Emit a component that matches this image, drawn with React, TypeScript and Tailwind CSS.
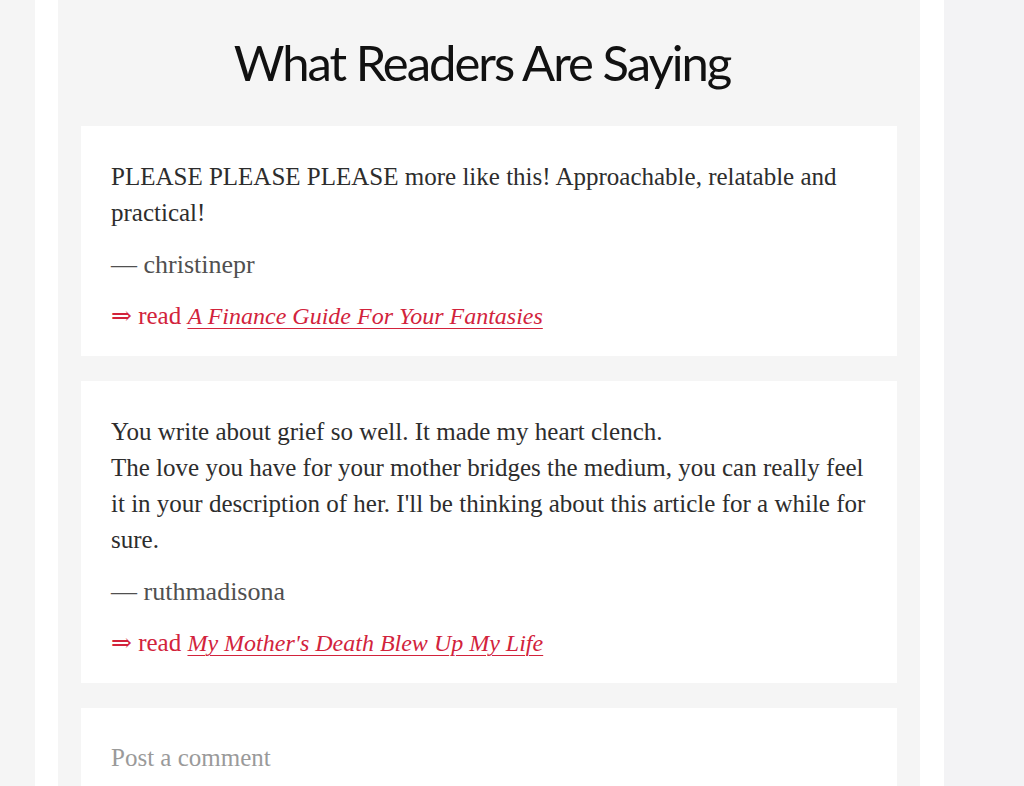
const serif = { fontFamily: '"Liberation Serif", "DejaVu Serif", serif' };

type Review = {
  body: string[];
  author: string;
  title: string;
};

const reviews: Review[] = [
  {
    body: ["PLEASE PLEASE PLEASE more like this! Approachable, relatable and practical!"],
    author: "christinepr",
    title: "A Finance Guide For Your Fantasies",
  },
  {
    body: [
      "You write about grief so well. It made my heart clench.",
      "The love you have for your mother bridges the medium, you can really feel it in your description of her. I'll be thinking about this article for a while for sure.",
    ],
    author: "ruthmadisona",
    title: "My Mother's Death Blew Up My Life",
  },
];

function ReviewCard({ review }: { review: Review }) {
  return (
    <div className="bg-white pl-[30px] pr-[24px] pt-[33px] pb-[22px]" style={serif}>
      <div className="text-[25px] leading-[36px] text-[#2d2d2d]">
        {review.body.map((line, i) => (
          <p key={i}>{line}</p>
        ))}
      </div>
      <p className="mt-[16px] text-[26px] leading-[36px] text-[#505050]">— {review.author}</p>
      <p className="mt-[15px] text-[25px] leading-[36px] text-[#d2233c]">
        ⇒ read{" "}
        <a href="#" className="text-[24px] italic underline decoration-1 underline-offset-4">
          {review.title}
        </a>
      </p>
    </div>
  );
}

export default function App() {
  return (
    <div className="flex h-[786px] w-[1024px] overflow-hidden bg-[#f4f4f5]">
      <div className="w-[35px] shrink-0 bg-[#f5f5f5]" />
      <div className="w-[23px] shrink-0 bg-white" />
      <div className="flex w-[862px] shrink-0 flex-col bg-[#f5f5f5] px-[23px]">
        <h2
          className="pt-[34px] pb-[36px] pr-[14px] text-center text-[49px] leading-[56px] tracking-[-2px] text-[#111]"
          style={{ fontFamily: 'Lato, "Open Sans", sans-serif' }}
        >
          What Readers Are Saying
        </h2>
        <div className="flex flex-col gap-[25px]">
          {reviews.map((r) => (
            <ReviewCard key={r.author} review={r} />
          ))}
          <div className="h-[100px] bg-white px-[30px] pt-[32px]">
            <p className="text-[25px] leading-[36px] text-[#9a9a9a]" style={serif}>
              Post a comment
            </p>
          </div>
        </div>
      </div>
      <div className="w-[24px] shrink-0 bg-white" />
      <div className="flex-1 bg-[#f3f3f5]" />
    </div>
  );
}
